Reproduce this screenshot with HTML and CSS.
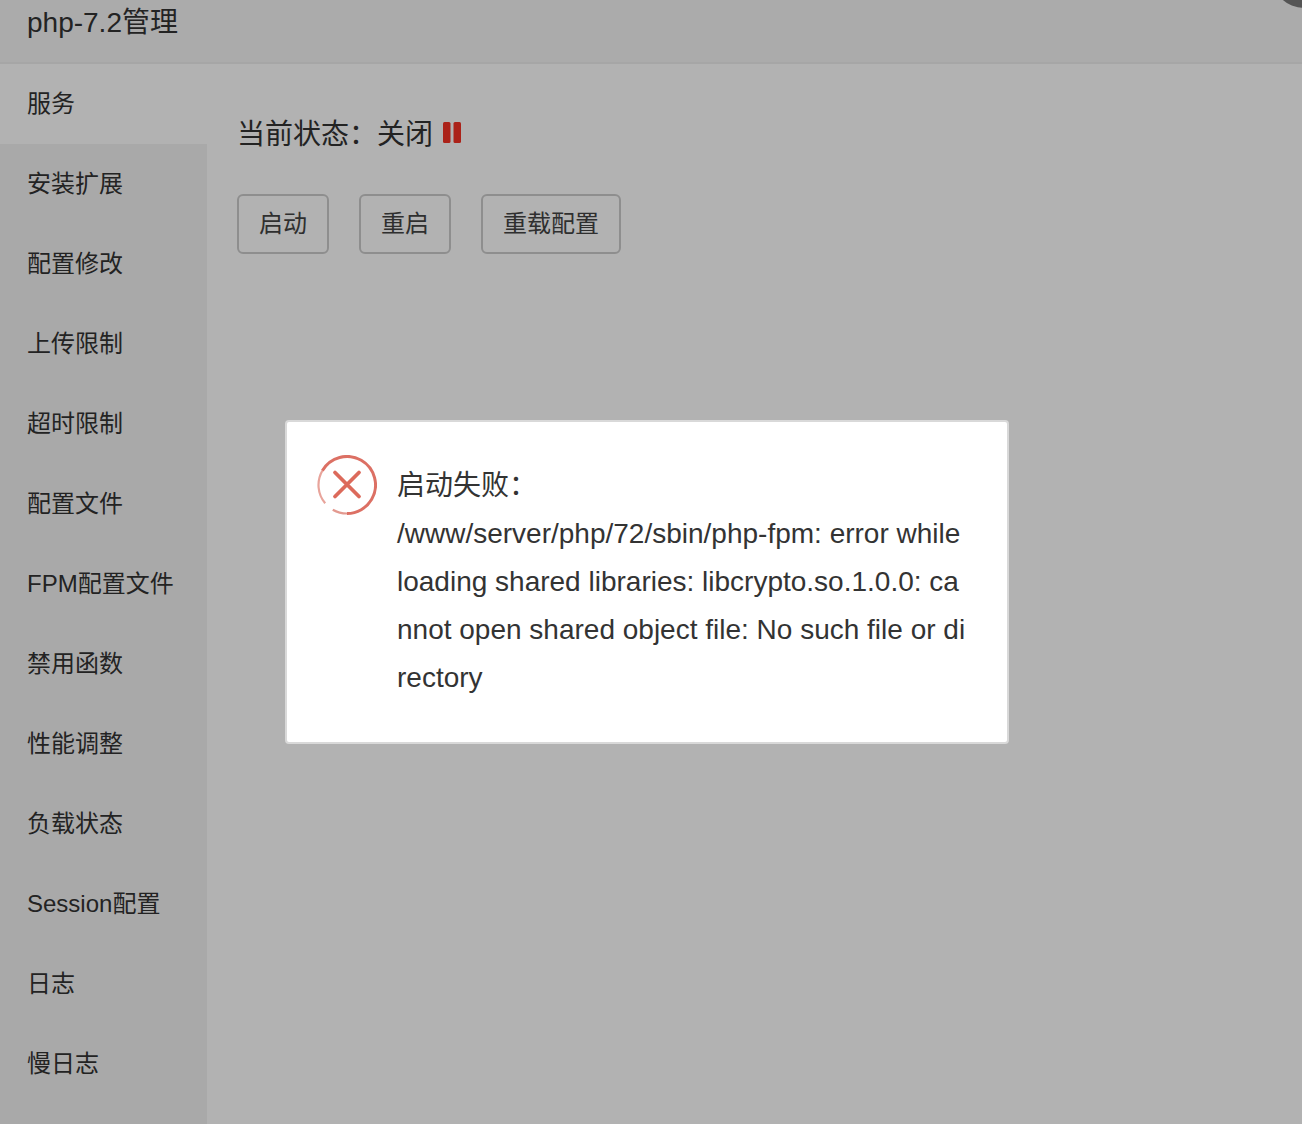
FILE: index.html
```html
<!DOCTYPE html>
<html lang="zh-CN">
<head>
<meta charset="utf-8">
<title>php-7.2管理</title>
<link rel="stylesheet" href="styles.css">
</head>
<body>
<div class="page">
  <header class="title-bar">php-7.2管理</header>
  <div class="body-row">
    <nav class="side-menu">
      <a class="menu-item active">服务</a>
      <a class="menu-item">安装扩展</a>
      <a class="menu-item">配置修改</a>
      <a class="menu-item">上传限制</a>
      <a class="menu-item">超时限制</a>
      <a class="menu-item">配置文件</a>
      <a class="menu-item">FPM配置文件</a>
      <a class="menu-item">禁用函数</a>
      <a class="menu-item">性能调整</a>
      <a class="menu-item">负载状态</a>
      <a class="menu-item">Session配置</a>
      <a class="menu-item">日志</a>
      <a class="menu-item">慢日志</a>
    </nav>
    <main class="content">
      <div class="status-line">
        <span>当前状态：关闭</span>
        <svg class="pause-icon" width="18" height="21" viewBox="0 0 18 21" aria-hidden="true"><rect x="0" y="0" width="7.500" height="21" rx="1.500"/><rect x="10.500" y="0" width="7.500" height="21" rx="1.500"/></svg>
      </div>
      <div class="btn-row">
        <button class="btn"><span class="btn-label">启动</span></button>
        <button class="btn"><span class="btn-label">重启</span></button>
        <button class="btn"><span class="btn-label">重载配置</span></button>
      </div>
    </main>
  </div>
</div>
<div class="shade"></div>
<div class="close-dot"></div>
<section class="dialog">
  <svg class="dialog-icon" width="60" height="60" viewBox="0 0 60 60" aria-hidden="true">
    <circle class="ring" cx="30" cy="30" r="28.500" pathLength="360" stroke-dasharray="240 120" transform="rotate(210 30 30)"/>
    <circle class="ring-mid" cx="30" cy="30" r="28.500" pathLength="360" stroke-dasharray="30 330" transform="rotate(90 30 30)"/>
    <circle class="ring-faint" cx="30" cy="30" r="28.500" pathLength="360" stroke-dasharray="70 290" transform="rotate(140 30 30)"/>
    <path class="cross" d="M18 17.500L42 41.500M42 17.500L18 41.500"/>
  </svg>
  <div class="dialog-text">启动失败：<br>/www/server/php/72/sbin/php-fpm: error while loading shared libraries: libcrypto.so.1.0.0: cannot open shared object file: No such file or directory</div>
</section>
</body>
</html>
```
FILE: styles.css
```css
* { box-sizing: border-box; }
html, body { margin: 0; height: 100%; overflow: hidden; }
body {
  font-family: "Liberation Sans", "Noto Sans CJK SC", sans-serif;
  color: #333;
  background: #fff;
}
.page { height: 1124px; display: flex; flex-direction: column; }
.title-bar {
  height: 64px;
  flex: none;
  padding: 0 27px 22px;
  display: flex;
  align-items: center;
  font-size: 28px;
  background: #f5f5f5;
  border-bottom: 2px solid #eee;
}
.body-row { flex: 1; display: flex; min-height: 0; }
.side-menu {
  width: 207px;
  flex: none;
  background: #f2f2f2;
  display: flex;
  flex-direction: column;
}
.menu-item {
  height: 80px;
  flex: none;
  padding: 0 0 5px 27px;
  display: flex;
  align-items: center;
  font-size: 24px;
  color: #333;
}
.menu-item.active { background: #fff; }
.content { flex: 1; padding: 49px 30px; }
.status-line {
  display: flex;
  align-items: center;
  gap: 10px;
  height: 38px;
  font-size: 28px;
  margin-bottom: 43px;
}
.pause-icon { fill: #f53224; }
.btn-row { display: flex; gap: 30px; }
.btn {
  height: 60px;
  padding: 0 20px 5px;
  font: inherit;
  font-size: 24px;
  color: #444;
  background: #fff;
  border: 2px solid #ccc;
  border-radius: 6px;
}
.shade { position: fixed; inset: 0; background: rgba(0, 0, 0, .3); }
.close-dot {
  position: fixed;
  right: -34px;
  top: -56px;
  width: 64px;
  height: 64px;
  border-radius: 50%;
  background: #555;
}
.dialog {
  position: fixed;
  left: 285px;
  top: 420px;
  width: 724px;
  height: 324px;
  padding: 33px 40px 0 30px;
  display: flex;
  gap: 20px;
  background: #fff;
  border: 2px solid #d9d9d9;
  border-radius: 4px;
}
.dialog-icon { flex: none; }
.ring, .ring-mid, .ring-faint, .cross { fill: none; }
.ring { stroke: #dc7064; stroke-width: 3; }
.ring-mid { stroke: #e39a90; stroke-width: 2.200; }
.ring-faint { stroke: #e8a49b; stroke-width: 2.200; }
.cross { stroke: #dc6a5b; stroke-width: 3.800; stroke-linecap: round; }
.dialog-text {
  flex: 1;
  min-width: 0;
  margin-top: 7px;
  font-size: 28px;
  line-height: 48px;
  color: #333;
  word-break: break-all;
}
```
